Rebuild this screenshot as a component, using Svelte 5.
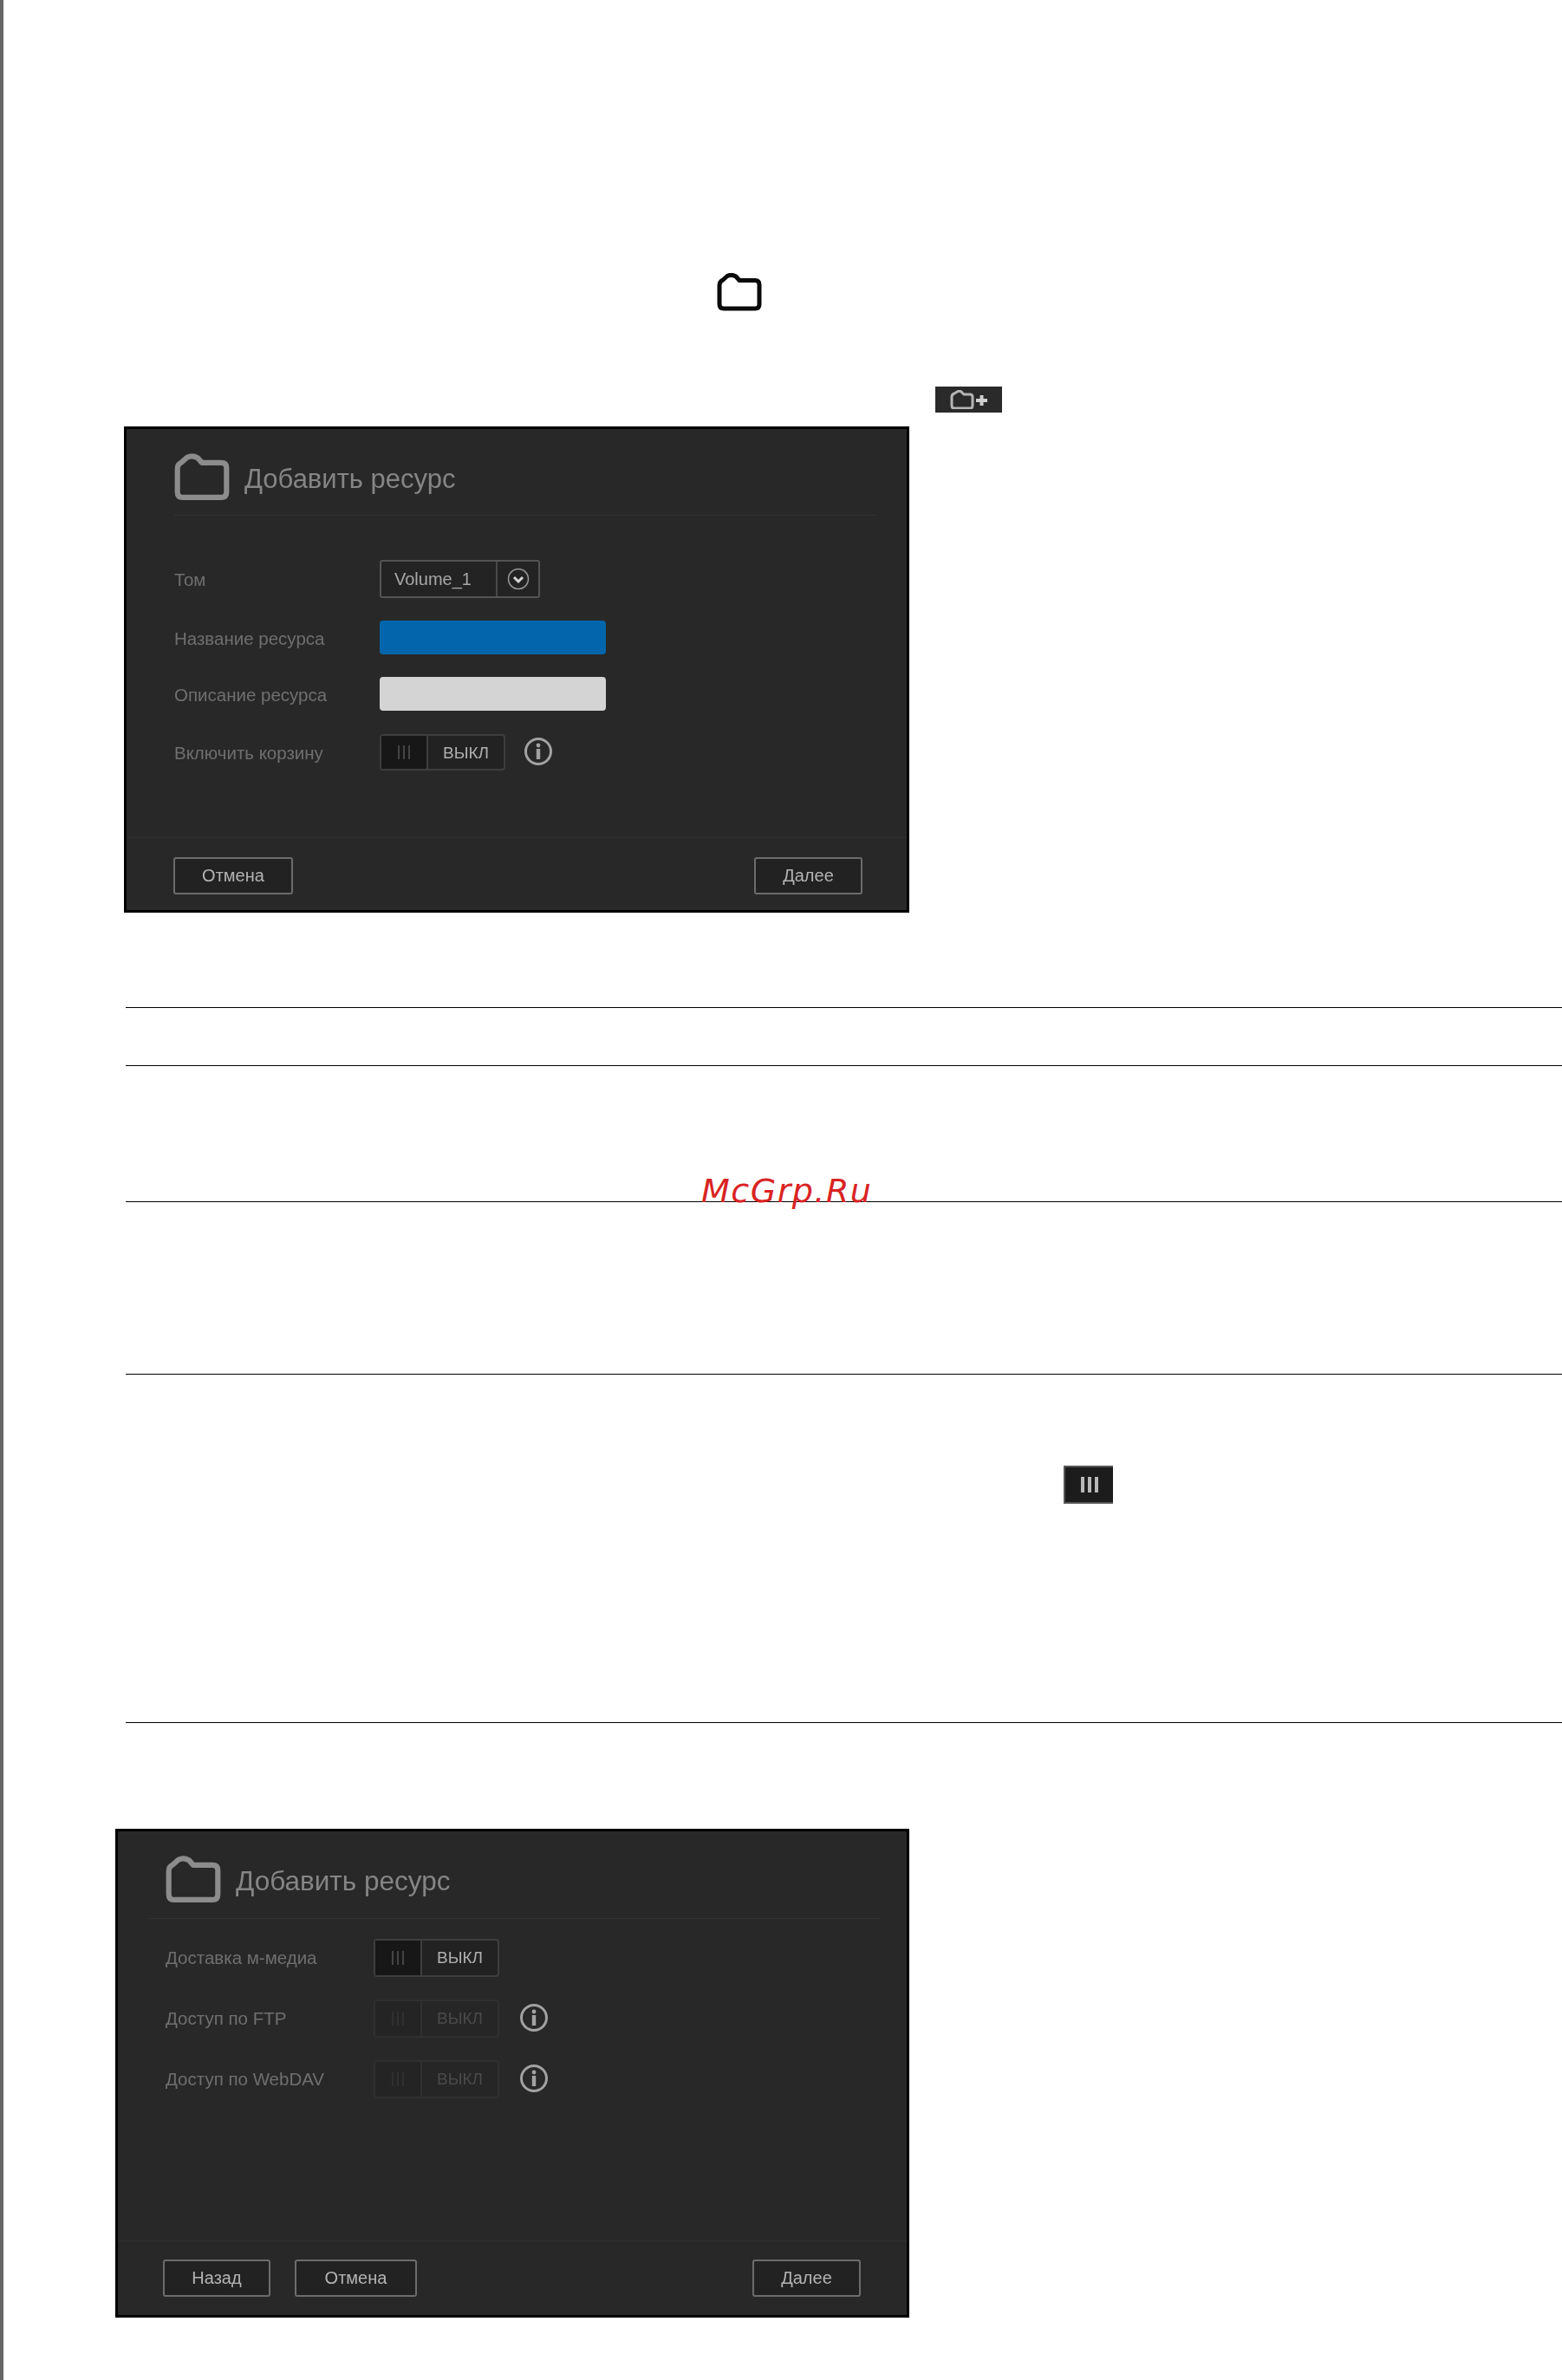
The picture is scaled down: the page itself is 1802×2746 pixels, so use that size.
<script>
	// rows of the second dialog
	const mediaRows = [
		{ label: 'Доставка м-медиа', off: false, info: false },
		{ label: 'Доступ по FTP', off: true, info: true },
		{ label: 'Доступ по WebDAV', off: true, info: true }
	];
</script>

{#snippet folder(cls)}
	<svg class={cls} viewBox="0 0 52 44" fill="none" stroke="currentColor" stroke-width="5" stroke-linejoin="round">
		<path d="M3 14 Q3 10 7 8 L12 3.500 Q17 1 22 4 L26 8.500 H44 Q49 8.500 49 13.500 V36 Q49 41 44 41 H8 Q3 41 3 36 Z" />
	</svg>
{/snippet}

{#snippet info()}
	<svg class="info" viewBox="0 0 34 34" fill="none">
		<circle cx="17" cy="17" r="14.500" stroke="#a2a2a2" stroke-width="3" />
		<circle cx="17" cy="10" r="2.400" fill="#a2a2a2" />
		<rect x="14.800" y="14" width="4.400" height="12" fill="#a2a2a2" />
	</svg>
{/snippet}

{#snippet toggle(off)}
	<div class="toggle" class:off>
		<span class="grip"><i></i><i></i><i></i></span>
		<span class="state">ВЫКЛ</span>
	</div>
{/snippet}

<div class="page">
	{@render folder('big-folder')}

	<div class="add-btn">
		<svg viewBox="0 0 46 22" fill="none">
			<path d="M2 8 Q2 5 5 4 L9 1.500 Q12 0.500 14 3 L16 5 H23 Q26 5 26 8 V18 Q26 21 23 21 H5 Q2 21 2 18 Z" stroke="#b5b5b5" stroke-width="3" />
			<path d="M30 12 H43 M36.500 6 V18" stroke="#d0d0d0" stroke-width="4" />
		</svg>
	</div>

	<section class="dialog first">
		<header class="head">
			{@render folder('head-folder')}
			<h2>Добавить ресурс</h2>
		</header>
		<div class="rows">
			<div class="row">
				<span class="label">Том</span>
				<div class="select">
					<span class="value">Volume_1</span>
					<span class="arrow">
						<svg viewBox="0 0 26 26" fill="none">
							<circle cx="13" cy="13" r="11.500" stroke="#9a9a9a" stroke-width="1.500" />
							<path d="M8 11 L13 16 L18 11" stroke="#d8d8d8" stroke-width="3" />
						</svg>
					</span>
				</div>
			</div>
			<div class="row input-row">
				<span class="label">Название ресурса</span>
				<div class="input blue"></div>
			</div>
			<div class="row input-row">
				<span class="label">Описание ресурса</span>
				<div class="input grey"></div>
			</div>
			<div class="row toggle-row">
				<span class="label">Включить корзину</span>
				{@render toggle(false)}
				{@render info()}
			</div>
		</div>
		<footer class="foot">
			<button>Отмена</button>
			<button class="next">Далее</button>
		</footer>
	</section>

	<div class="rule rule-a"></div>
	<div class="rule rule-b"></div>
	<div class="rule rule-c"></div>
	<div class="rule rule-d"></div>

	<div class="bars-btn"><i></i><i></i><i></i></div>

	<div class="rule rule-e"></div>

	<section class="dialog second">
		<header class="head">
			{@render folder('head-folder')}
			<h2>Добавить ресурс</h2>
		</header>
		<div class="rows">
			{#each mediaRows as row}
				<div class="row">
					<span class="label">{row.label}</span>
					{@render toggle(row.off)}
					{#if row.info}
						{@render info()}
					{/if}
				</div>
			{/each}
		</div>
		<footer class="foot">
			<button>Назад</button>
			<button>Отмена</button>
			<button class="next">Далее</button>
		</footer>
	</section>

	<div class="watermark">McGrp.Ru</div>
</div>

<style>
	:global(body) {
		margin: 0;
		background: #fff;
	}

	.page {
		position: relative;
		box-sizing: border-box;
		height: 2746px;
		padding-top: 315px;
		border-left: 4px solid #666;
		font-family: "Liberation Sans", Arial, sans-serif;
		overflow: hidden;
	}

	.big-folder {
		display: block;
		width: 52px;
		height: 44px;
		margin-left: 823px;
		color: #0a0a0a;
	}

	.add-btn {
		display: flex;
		align-items: center;
		justify-content: center;
		box-sizing: border-box;
		width: 77px;
		height: 30px;
		margin: 87px 0 0 1075px;
		background: #2a2a2a;
	}

	.add-btn svg {
		width: 46px;
		height: 22px;
		margin-left: 2px;
	}

	.dialog {
		display: flex;
		flex-direction: column;
		box-sizing: border-box;
		background: #282828;
		border: 3px solid #000;
		color: #7a7a7a;
	}

	.dialog.first {
		width: 906px;
		height: 561px;
		margin: 16px 0 0 139px;
	}

	.dialog.second {
		width: 916px;
		height: 564px;
		margin: 122px 0 0 129px;
	}

	.head {
		display: flex;
		align-items: flex-start;
		gap: 17px;
		box-sizing: border-box;
		height: 100px;
		margin: 0 36px 0 55px;
		padding-top: 28px;
		border-bottom: 1px solid #323232;
		filter: blur(0.6px);
	}

	.second .head {
		height: 101px;
		margin: 0 31px 0 36px;
		padding-left: 19px;
		gap: 17px;
	}

	.head-folder {
		width: 64px;
		height: 55px;
		color: #8c8c8c;
		flex: none;
	}

	h2 {
		margin: 10px 0 0;
		font-size: 31px;
		font-weight: 400;
		line-height: 40px;
		color: #858585;
	}

	.second h2 {
		margin-top: 9px;
		font-size: 31.500px;
	}

	.rows {
		display: flex;
		flex-direction: column;
		gap: 26px;
		padding: 51px 0 0 55px;
		filter: blur(0.6px);
	}

	.second .rows {
		padding-top: 23px;
	}

	.row {
		display: flex;
		align-items: center;
		height: 44px;
	}

	.input-row {
		height: 39px;
	}

	.toggle-row {
		height: 42px;
		margin-top: 1px;
	}

	.first .label {
		padding-top: 2px;
	}

	.label {
		flex: none;
		width: 237px;
		font-size: 20.500px;
		color: #6f6f6f;
	}

	.second .label {
		width: 240px;
	}

	.select {
		display: flex;
		box-sizing: border-box;
		width: 185px;
		height: 44px;
		border: 2px solid #545454;
		border-radius: 3px;
		background: #232323;
	}

	.value {
		flex: 1;
		padding-left: 15px;
		font-size: 20px;
		line-height: 40px;
		color: #a8a8a8;
	}

	.arrow {
		display: flex;
		align-items: center;
		justify-content: center;
		width: 47px;
		border-left: 2px solid #484848;
	}

	.arrow svg {
		width: 26px;
		height: 26px;
	}

	.input {
		width: 261px;
		height: 39px;
		border-radius: 4px;
	}

	.blue {
		background: #0366ac;
	}

	.grey {
		background: #d4d4d4;
	}

	.toggle {
		display: flex;
		box-sizing: border-box;
		width: 145px;
		height: 100%;
		border: 2px solid #3e3e3e;
		border-radius: 4px;
		background: #222;
	}

	.grip {
		display: flex;
		align-items: center;
		justify-content: center;
		gap: 4px;
		flex: none;
		width: 52px;
		background: #171717;
		border-right: 2px solid #3e3e3e;
	}

	.grip i {
		width: 2px;
		height: 16px;
		background: #444;
	}

	.state {
		flex: 1;
		text-align: center;
		font-size: 19px;
		line-height: 40px;
		color: #b0b0b0;
	}

	.toggle.off {
		border-color: #2f2f2f;
		background: #262626;
	}

	.toggle.off .grip {
		background: #242424;
		border-right-color: #2f2f2f;
	}

	.toggle.off .grip i {
		background: #303030;
	}

	.toggle.off .state {
		color: #4a4a4a;
	}

	.info {
		flex: none;
		width: 34px;
		height: 34px;
		margin-left: 21px;
		margin-bottom: 2px;
	}

	.second .info {
		margin-left: 23px;
		margin-bottom: 3px;
	}

	.foot {
		display: flex;
		gap: 28px;
		margin-top: auto;
		box-sizing: border-box;
		height: 84px;
		padding: 22px 51px 0 54px;
		border-top: 1px solid #303030;
		filter: blur(0.5px);
	}

	.second .foot {
		height: 86px;
		padding: 21px 53px 0 52px;
	}

	button {
		box-sizing: border-box;
		width: 138px;
		height: 43px;
		padding: 0;
		font: 20px "Liberation Sans", Arial, sans-serif;
		color: #b4b4b4;
		background: #222;
		border: 2px solid #6c6c6c;
		border-radius: 3px;
	}

	.second button:first-child {
		width: 124px;
	}

	.second button:nth-child(2) {
		width: 141px;
	}

	.next {
		width: 125px;
		margin-left: auto;
	}

	.rule {
		height: 1px;
		margin-left: 141px;
		background: #000;
	}

	.rule-a {
		margin-top: 109px;
	}

	.rule-b {
		margin-top: 66px;
	}

	.rule-c {
		margin-top: 156px;
	}

	.rule-d {
		margin-top: 198px;
	}

	.rule-e {
		margin-top: 252px;
	}

	.bars-btn {
		display: flex;
		align-items: center;
		justify-content: center;
		gap: 4px;
		box-sizing: border-box;
		width: 57px;
		height: 44px;
		margin: 105px 0 0 1223px;
		background: #1c1c1c;
		border: 2px solid #555;
		border-width: 2px 0 2px 2px;
	}

	.bars-btn i {
		width: 4px;
		height: 18px;
		background: #b8b8b8;
	}

	.watermark {
		position: absolute;
		left: 805px;
		top: 1352px;
		font: italic 38px "DejaVu Sans", sans-serif;
		letter-spacing: 1.500px;
		color: #d92323;
	}
</style>
